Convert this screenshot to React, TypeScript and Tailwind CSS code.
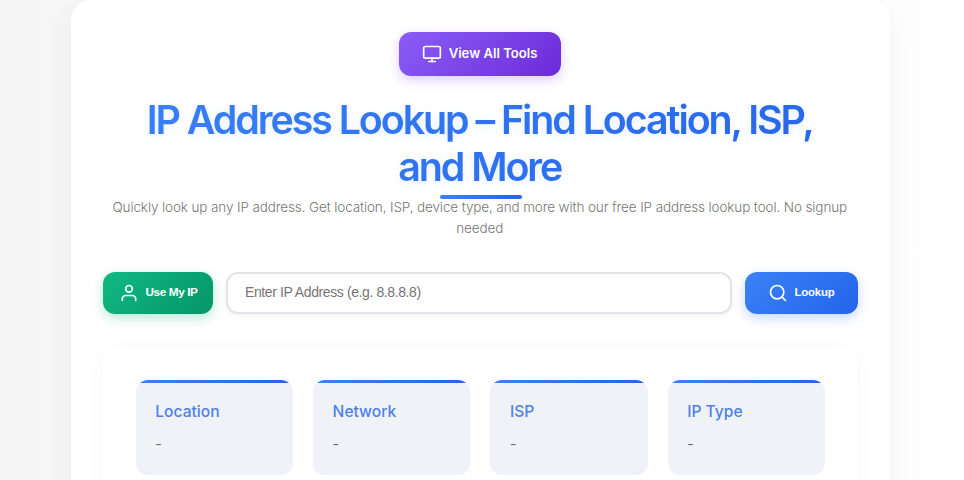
import { Monitor, Search } from "lucide-react";

const cards = ["Location", "Network", "ISP", "IP Type"];

function UserIcon() {
  return (
    <svg width="20" height="20" viewBox="0 0 24 24" fill="none" stroke="currentColor" strokeWidth="2" strokeLinecap="round" strokeLinejoin="round">
      <path d="M20 21v-2a4 4 0 0 0-4-4H8a4 4 0 0 0-4 4v2" />
      <circle cx="12" cy="7" r="4" />
    </svg>
  );
}

export default function App() {
  return (
    <div className="h-[480px] w-[964px] overflow-hidden bg-linear-to-r from-[#f5f5f5] to-[#fefefe] pl-[71px] font-[Inter,sans-serif]">
      <main className="h-[560px] w-[819px] rounded-[20px] bg-white px-8 pt-8 shadow-[0_8px_28px_rgba(0,0,0,0.05)]">
        <div className="mr-px flex justify-center">
          <button className="flex h-11 w-[162px] items-center justify-center gap-[7px] rounded-xl bg-linear-135 from-[#8b5cf6] to-[#6d28d9] pr-px text-[13.1px] font-semibold text-white shadow-[0_4px_12px_rgba(139,92,246,0.3)]">
            <Monitor size={20} strokeWidth={2} />
            View All Tools
          </button>
        </div>
        <div className="mt-[21px] flex h-[102px] flex-col items-center">
          <h1 className="h-[94px] w-full bg-linear-135 from-[#3b82f6] to-[#2563eb] bg-clip-text pr-[1.5px] text-center text-[39.4px] leading-[46.7px] font-semibold tracking-[-2.07px] whitespace-nowrap text-transparent [text-shadow:0_2px_10px_rgba(59,130,246,0.12)]">
            IP Address Lookup – Find Location, ISP,
            <br />
            and More
          </h1>
          <div className="mt-[4px] h-[3.5px] w-[82px] shrink-0 rounded-sm bg-linear-to-r from-[#3b82f6] to-[#2563eb]" />
        </div>
        <p className="-mt-[2px] pr-[1.5px] text-center text-[13.5px] leading-[20.5px] font-light tracking-[-0.12px] whitespace-nowrap text-[#777]">
          Quickly look up any IP address. Get location, ISP, device type, and more with our free IP address lookup tool. No signup
          <br />
          needed
        </p>
        <div className="mt-[34px] flex h-[42px] items-center gap-[13px] font-['Liberation_Sans',Arial,sans-serif]">
          <button className="flex h-[42px] w-[110px] items-center justify-center gap-[6px] rounded-xl bg-linear-135 from-[#10b981] to-[#059669] pl-px text-[11.8px] font-bold tracking-[-0.4px] text-white shadow-[0_4px_12px_rgba(16,185,129,0.3)]">
            <UserIcon />
            Use My IP
          </button>
          <input
            className="h-[42px] min-w-0 flex-1 rounded-xl border-2 border-[#e2e4ea] bg-white px-[17px] pb-[2px] text-[14px] tracking-[-0.4px] shadow-[0_2px_4px_rgba(0,0,0,0.05)] placeholder:text-[#757575]"
            placeholder="Enter IP Address (e.g. 8.8.8.8)"
          />
          <button className="flex h-[42px] w-[113px] items-center justify-center gap-[7px] rounded-xl bg-linear-135 from-[#3b82f6] to-[#2563eb] pr-px text-[11.4px] font-bold tracking-[-0.2px] text-white shadow-[0_4px_12px_rgba(59,130,246,0.3)]">
            <Search size={20} strokeWidth={2} />
            Lookup
          </button>
        </div>
        <section className="mt-[33px] grid h-[190px] grid-cols-4 gap-[20px] rounded-2xl bg-white pt-[33px] pr-[33px] pl-[32.8px] shadow-[0_4px_20px_rgba(0,0,0,0.04)]">
          {cards.map((name) => (
            <div key={name} className="h-[95px] overflow-hidden rounded-xl bg-[#eff2f7]">
              <div className="h-[3px] bg-linear-to-r from-[#3b82f6] to-[#2563eb]" />
              <div className="px-[19.5px] pt-[18px]">
                <h3 className="text-[15.6px] leading-[22px] font-medium text-[#4f7fe8]">{name}</h3>
                <p className="mt-[10px] text-[14px] leading-[21px] text-[#666]">-</p>
              </div>
            </div>
          ))}
        </section>
      </main>
    </div>
  );
}
